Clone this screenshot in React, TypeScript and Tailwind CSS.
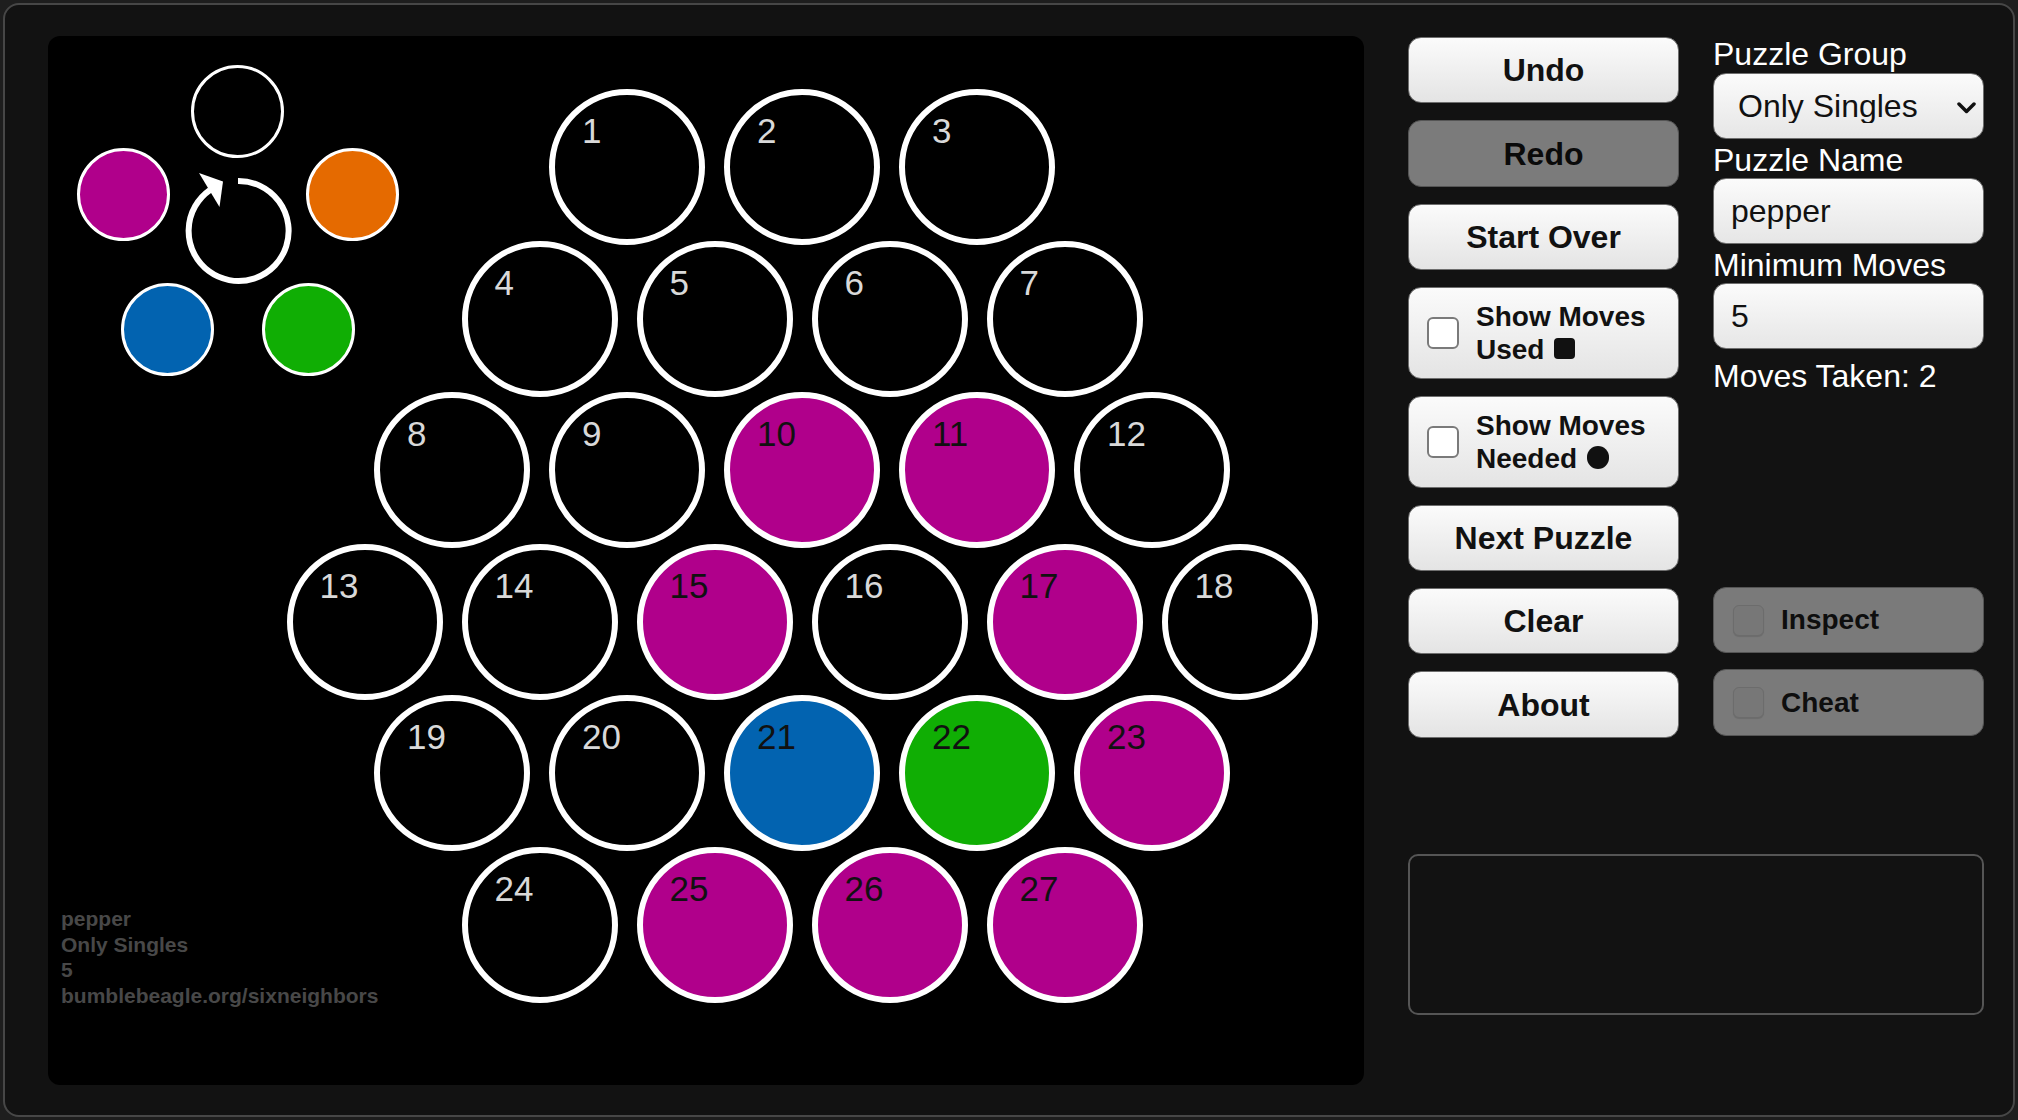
import React from "react";

const MAG = "#b0008b";
const BLUE = "#0263b0";
const GREEN = "#10ae04";
const ORANGE = "#e56a00";

const rowStarts = [579, 491.5, 404, 316.5, 404, 491.5];
const rowCounts = [3, 4, 5, 6, 5, 4];
const colors: Record<number, string> = {
  10: MAG,
  11: MAG,
  15: MAG,
  17: MAG,
  23: MAG,
  25: MAG,
  26: MAG,
  27: MAG,
  21: BLUE,
  22: GREEN,
};

type Cell = { n: number; cx: number; cy: number };
const cells: Cell[] = [];
{
  let n = 1;
  rowCounts.forEach((c, r) => {
    for (let i = 0; i < c; i++) {
      cells.push({ n, cx: rowStarts[r] + i * 175, cy: 131 + r * 151.6 });
      n++;
    }
  });
}

const palette = [
  { cx: 189.5, cy: 75, color: "#000000" },
  { cx: 75.5, cy: 158, color: MAG },
  { cx: 304.5, cy: 158, color: ORANGE },
  { cx: 119, cy: 293, color: BLUE },
  { cx: 260.5, cy: 293, color: GREEN },
];

const btn =
  "h-[66px] w-full rounded-[13px] border-[1.5px] border-[#6e6e6e] bg-linear-to-b from-[#fbfbfb] to-[#e4e4e4] text-[32px] font-bold text-[#111] flex items-center justify-center";
const btnRedo =
  "h-[67px] w-full rounded-[13px] border-[1.5px] border-[#555] bg-[#7b7b7b] text-[32px] font-bold text-[#0a0a0a] flex items-center justify-center";
const btnDisabled =
  "w-full rounded-[13px] border-[1.5px] border-[#555] bg-[#7a7a7a] text-[28px] font-bold text-[#0e0e0e] flex items-center";

function Board() {
  return (
    <div className="relative w-[1316px] h-[1049px] shrink-0 rounded-[12px] bg-black overflow-hidden">
      {palette.map((p, i) => (
        <div
          key={i}
          className="absolute w-[93px] h-[93px] rounded-full border-[3.5px] border-white"
          style={{ left: p.cx - 46.5, top: p.cy - 46.5, backgroundColor: p.color }}
        />
      ))}
      <svg
        className="absolute left-[130px] top-[135px]"
        width="120"
        height="120"
        viewBox="0 0 120 120"
      >
        <path d="M 60 10 A 50 50 0 1 1 32 19" fill="none" stroke="#fff" strokeWidth="6" />
        <polygon points="21,2 45,10.5 41.5,36" fill="#fff" />
      </svg>
      {cells.map((c) => {
        const col = colors[c.n];
        return (
          <div
            key={c.n}
            className="absolute w-[156px] h-[156px] rounded-full border-[6.5px] border-white"
            style={{ left: c.cx - 78, top: c.cy - 78, backgroundColor: col ?? "#000" }}
          >
            <span
              className={
                "absolute left-[27px] top-[18px] text-[35px] leading-none " +
                (col ? "text-[#111]" : "text-[#d9d9d9]")
              }
            >
              {c.n}
            </span>
          </div>
        );
      })}
      <div className="absolute left-[13px] top-[870px] text-[21px] leading-[25.5px] font-bold text-[#484848]">
        <div>pepper</div>
        <div>Only Singles</div>
        <div>5</div>
        <div>bumblebeagle.org/sixneighbors</div>
      </div>
    </div>
  );
}

function CheckButton({ l1, l2, mark }: { l1: string; l2: string; mark: "square" | "circle" }) {
  return (
    <button className="h-[92px] w-full rounded-[13px] border-[1.5px] border-[#6e6e6e] bg-linear-to-b from-[#fbfbfb] to-[#e4e4e4] flex items-center pl-[18px] gap-[17px] text-left">
      <span className="w-[32px] h-[32px] shrink-0 rounded-[6px] border-2 border-[#7a7a7a] bg-white" />
      <span className="text-[28px] leading-[33px] font-bold text-[#111]">
        {l1}
        <br />
        {l2}{" "}
        {mark === "square" ? (
          <span className="inline-block w-[21px] h-[21px] rounded-[4px] bg-[#111] align-baseline ml-[2px]" />
        ) : (
          <span className="inline-block w-[22px] h-[23px] rounded-full bg-[#111] align-[-1px] ml-[2px]" />
        )}
      </span>
    </button>
  );
}

function DisabledCheck({ label }: { label: string }) {
  return (
    <div className={btnDisabled + " pl-[19px] gap-[17px]"}>
      <span className="w-[31px] h-[31px] shrink-0 rounded-[6px] border border-[#6c6c6c] bg-[#777] shadow-[0_1px_1px_rgba(0,0,0,0.12)]" />
      <span>{label}</span>
    </div>
  );
}

const field =
  "w-full h-[66px] rounded-[13px] border-[1.5px] border-[#6e6e6e] bg-linear-to-b from-[#fbfbfb] to-[#e6e6e6] text-[32px] text-[#111] outline-none";

export default function App() {
  return (
    <div className="w-[2018px] h-[1120px] bg-[#1e1e1e] p-[3px] font-['Liberation_Sans',Arial,sans-serif]">
      <div className="h-full w-full rounded-[16px] border-2 border-[#474747] bg-[#121212] flex pl-[43px] pt-[31px]">
        <Board />
        <div className="ml-[44px] pt-[1px] grid grid-cols-[271px_271px] gap-x-[34px] content-start">
          <div className="flex flex-col gap-[17px]">
            <button className={btn}>Undo</button>
            <button className={btnRedo}>Redo</button>
            <button className={btn}>Start Over</button>
            <CheckButton l1="Show Moves" l2="Used" mark="square" />
            <CheckButton l1="Show Moves" l2="Needed" mark="circle" />
            <button className={btn}>Next Puzzle</button>
            <button className={btn}>Clear</button>
            <button className={btn + " h-[67px]"}>About</button>
          </div>
          <div className="flex flex-col">
            <div className="h-[550px] flex flex-col text-white text-[32px] leading-[34px]">
              <div>Puzzle Group</div>
              <div className="relative mt-[2px]">
                <select className={field + " appearance-none pl-[24px]"} defaultValue="Only Singles">
                  <option>Only Singles</option>
                  <option>Doubles</option>
                </select>
                <svg
                  className="absolute right-[8px] top-[29px] pointer-events-none"
                  width="19"
                  height="12"
                  viewBox="0 0 19 12"
                >
                  <path d="M2 2 L9.5 9.5 L17 2" fill="none" stroke="#111" strokeWidth="3.5" strokeLinecap="round" strokeLinejoin="round" />
                </svg>
              </div>
              <div className="mt-[4px]">Puzzle Name</div>
              <input className={field + " mt-[1px] pl-[17px]"} defaultValue="pepper" />
              <div className="mt-[4px]">Minimum Moves</div>
              <input className={field + " mt-[1px] pl-[17px]"} defaultValue="5" />
              <div className="mt-[10px]">Moves Taken: 2</div>
            </div>
            <div className="flex flex-col gap-[16px]">
              <div className="h-[66px] flex">
                <DisabledCheck label="Inspect" />
              </div>
              <div className="h-[67px] flex">
                <DisabledCheck label="Cheat" />
              </div>
            </div>
          </div>
          <textarea className="col-span-2 mt-[116px] h-[161px] w-full resize-none rounded-[10px] border-2 border-[#555] bg-[#121212] outline-none" />
        </div>
      </div>
    </div>
  );
}
